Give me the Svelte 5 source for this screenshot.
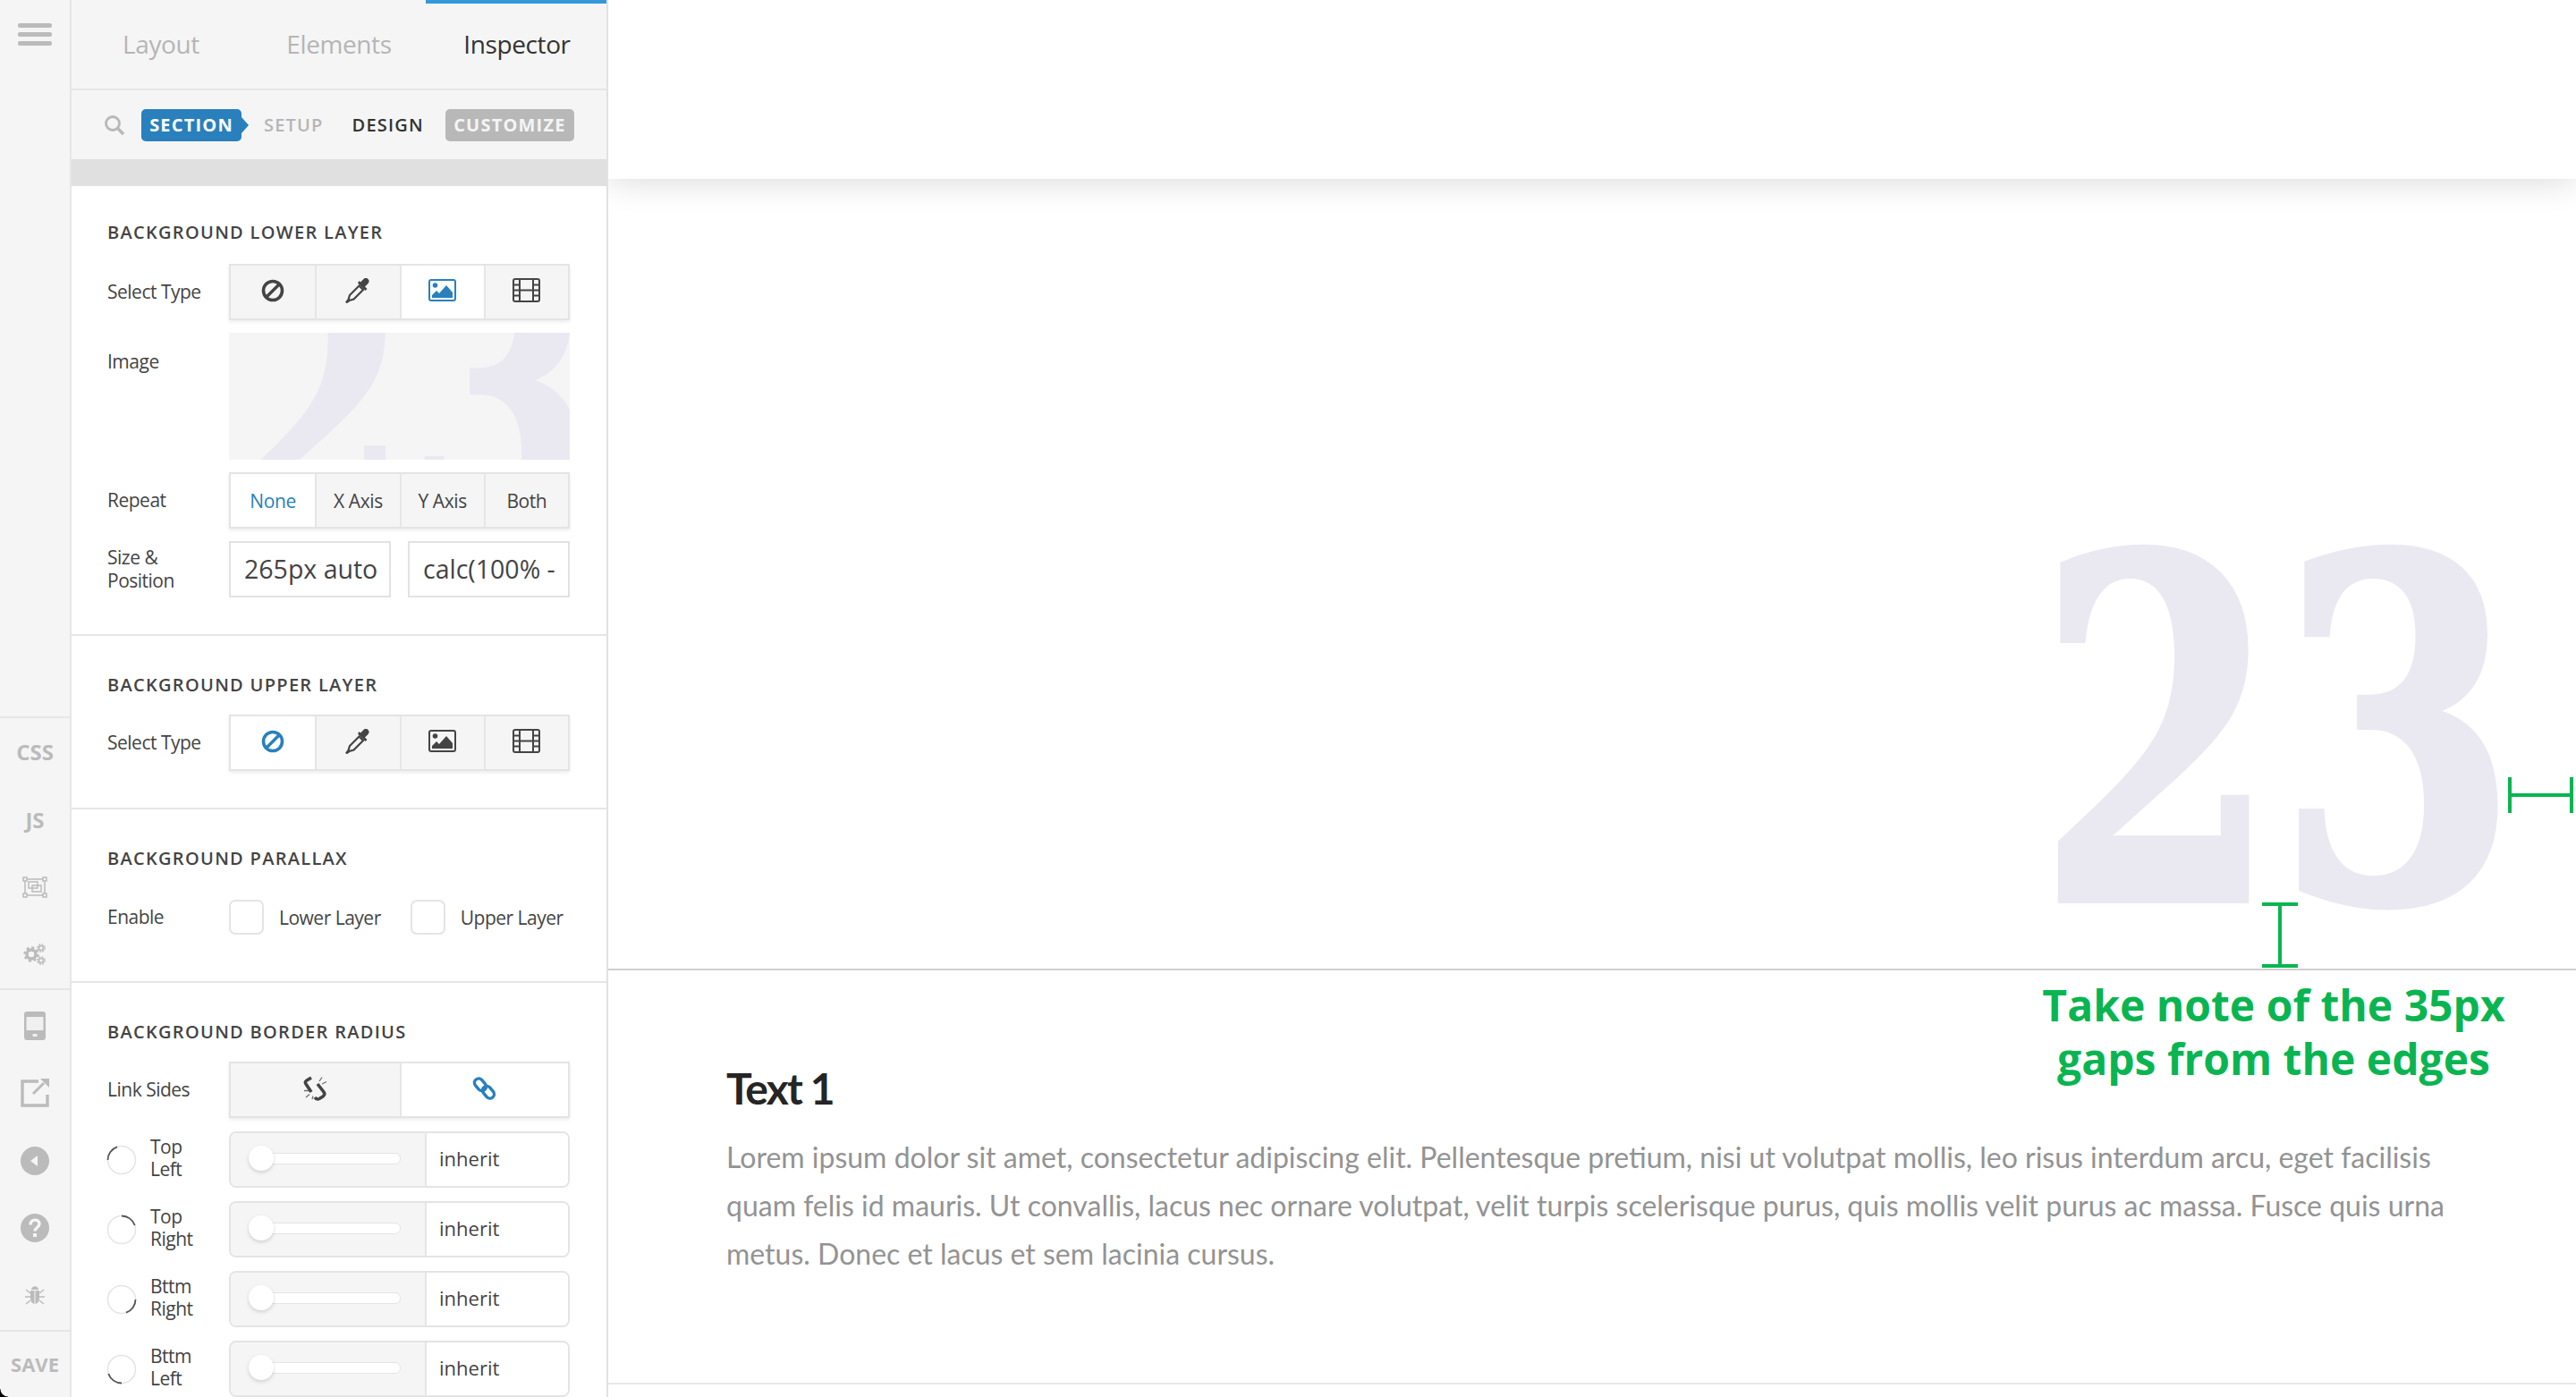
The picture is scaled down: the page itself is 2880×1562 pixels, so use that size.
<script>
  const tabs = [
    { text: "Layout" },
    { text: "Elements" },
    { text: "Inspector", active: true },
  ];
  const lowerTypes = [
    { icon: "ban" },
    { icon: "dropper" },
    { icon: "image", active: true },
    { icon: "film" },
  ];
  const upperTypes = [
    { icon: "ban", active: true },
    { icon: "dropper" },
    { icon: "image" },
    { icon: "film" },
  ];
  const repeats = [
    { text: "None", active: true },
    { text: "X Axis" },
    { text: "Y Axis" },
    { text: "Both" },
  ];
  const corners = [
    { one: "Top", two: "Left", angle: 0 },
    { one: "Top", two: "Right", angle: 90 },
    { one: "Bttm", two: "Right", angle: 180 },
    { one: "Bttm", two: "Left", angle: 270 },
  ];
  const railTop = ["css", "js", "transform", "gears"];
  const railBottom = ["device", "export", "back", "help", "bug"];
</script>

{#snippet icon(name)}
  {#if name === "ban"}
    <svg class="ico" width="26" height="26" viewBox="0 0 26 26">
      <circle cx="13" cy="13" r="10.500" fill="none" stroke="currentColor" stroke-width="3.600" />
      <path d="M6.500 19.500 19.500 6.500" stroke="currentColor" stroke-width="3.400" />
    </svg>
  {:else if name === "dropper"}
    <svg class="ico" width="28" height="28" viewBox="0 0 28 28">
      <path d="M15.500 8.500 5 19l-1.500 5L1 27.500l3.500-2.500 5-1.500L20 13z" fill="none" stroke="currentColor" stroke-width="2.200" />
      <path d="M14 5.500 22.500 14l2-2-2.500-2.500L25.500 6c1.500-2 1.500-3.500 0-5s-3.500-1.500-5 0L17 4.500 15.500 3z" fill="currentColor" />
    </svg>
  {:else if name === "image"}
    <svg class="ico" width="31" height="25" viewBox="0 0 31 25">
      <rect x="1" y="1" width="29" height="23" rx="2" fill="none" stroke="currentColor" stroke-width="2" />
      <circle cx="7.500" cy="7" r="2.800" fill="currentColor" />
      <path d="M4 21v-3l5-5 3 3 8-9 7 8v6z" fill="currentColor" />
    </svg>
  {:else if name === "film"}
    <svg class="ico" width="31" height="27" viewBox="0 0 31 27">
      <rect x="1" y="1" width="29" height="25" rx="2" fill="none" stroke="currentColor" stroke-width="2" />
      <path d="M8 1v25M23 1v25M8 13.500h15M1 7.500h7M1 13.500h7M1 19.500h7M23 7.500h7M23 13.500h7M23 19.500h7" stroke="currentColor" stroke-width="2" fill="none" />
    </svg>
  {:else if name === "unlink"}
    <svg class="ico" width="27" height="28" viewBox="0 0 27 28">
      <path d="M9 2 4 5Q1.500 6.500 3 9l6 9M16 9l7 9q2 3-1 5l-4 2.500q-3 1.500-5-1.500" fill="none" stroke="currentColor" stroke-width="3.600" />
      <path d="M21 1.500l-3 4.500M26 6.500 21 9M1 16.500h5M3 24l4-3.500M10 26l1-3.500" fill="none" stroke="currentColor" stroke-width="1.300" opacity=".75" />
    </svg>
  {:else if name === "link"}
    <svg class="ico" width="27" height="28" viewBox="0 0 27 28">
      <rect x="1.500" y="5" width="15" height="9.500" rx="4.700" transform="rotate(50 9 9.700)" fill="none" stroke="currentColor" stroke-width="3.400" />
      <rect x="10.500" y="13.500" width="15" height="9.500" rx="4.700" transform="rotate(50 18 18.200)" fill="none" stroke="currentColor" stroke-width="3.400" />
    </svg>
  {:else if name === "css"}
    <span class="rail-text">CSS</span>
  {:else if name === "js"}
    <span class="rail-text">JS</span>
  {:else if name === "transform"}
    <svg width="28" height="24" viewBox="0 0 28 24" fill="none" stroke="currentColor" stroke-width="1.500">
      <rect x="3" y="3" width="22" height="18" />
      <rect x="7" y="6" width="10" height="7" />
      <rect x="11" y="10" width="10" height="7" />
      <rect x="1" y="1" width="4" height="4" fill="#f5f5f5" />
      <rect x="23" y="1" width="4" height="4" fill="#f5f5f5" />
      <rect x="1" y="19" width="4" height="4" fill="#f5f5f5" />
      <rect x="23" y="19" width="4" height="4" fill="#f5f5f5" />
    </svg>
  {:else if name === "gears"}
    <svg width="26" height="24" viewBox="0 0 26 24" fill="none" stroke="currentColor">
      <circle cx="9" cy="12" r="5" stroke-width="3.400" />
      <circle cx="9" cy="12" r="7.500" stroke-width="2.400" stroke-dasharray="3 2.900" />
      <circle cx="20" cy="5" r="2.500" stroke-width="1.600" />
      <circle cx="20" cy="5" r="4.200" stroke-width="1.400" stroke-dasharray="2 1.300" />
      <circle cx="20" cy="19" r="2.500" stroke-width="1.600" />
      <circle cx="20" cy="19" r="4.200" stroke-width="1.400" stroke-dasharray="2 1.300" />
    </svg>
  {:else if name === "device"}
    <svg width="24" height="32" viewBox="0 0 24 32">
      <rect width="24" height="32" rx="3" fill="currentColor" />
      <rect x="2.500" y="6" width="19" height="15" fill="#f0f0f0" />
      <rect x="9.500" y="25" width="5" height="3" fill="#f0f0f0" />
    </svg>
  {:else if name === "export"}
    <svg width="32" height="32" viewBox="0 0 32 32" fill="none" stroke="currentColor">
      <path d="M20 3H2v27h28V18" stroke-width="3.400" />
      <path d="M14 17 26 5" stroke-width="3" />
      <path d="M22 0h10v10z" fill="currentColor" stroke="none" />
    </svg>
  {:else if name === "back"}
    <svg width="32" height="32" viewBox="0 0 32 32">
      <circle cx="16" cy="16" r="16" fill="currentColor" />
      <path d="M11 16l8-6v12z" fill="#f5f5f5" />
    </svg>
  {:else if name === "help"}
    <svg width="32" height="32" viewBox="0 0 32 32">
      <circle cx="16" cy="16" r="16" fill="currentColor" />
      <path d="M11 12.500c0-7 10-7 10-1 0 4-5 4-5 8" fill="none" stroke="#f5f5f5" stroke-width="3.400" />
      <rect x="14" y="22" width="4" height="4" fill="#f5f5f5" />
    </svg>
  {:else if name === "bug"}
    <svg width="22" height="22" viewBox="0 0 22 22" fill="currentColor">
      <path d="M7 4c0-5 8-5 8 0z" />
      <path d="M6 5h4.500v15C7 19 6 16 6 13zM11.500 5H16v8c0 3-1 6-4.500 7z" />
      <path d="M1 4l5 4M21 4l-5 4M0 12h6M22 12h-6M1 20l5-4M21 20l-5-4" stroke="currentColor" stroke-width="1.500" />
    </svg>
  {/if}
{/snippet}

{#snippet segments(items)}
  <div class="segments" style="grid-template-columns: repeat({items.length}, 1fr)">
    {#each items as item}
      <div class="cell" class:active={item.active}>
        {#if item.icon}
          {@render icon(item.icon)}
        {:else}
          {item.text}
        {/if}
      </div>
    {/each}
  </div>
{/snippet}

<div class="page">
  <nav class="rail">
    <div class="burger"><i></i><i></i><i></i></div>
    <div class="rail-group first-group">
      {#each railTop as r}
        <div class="rail-item">{@render icon(r)}</div>
      {/each}
    </div>
    <div class="rail-group second-group">
      {#each railBottom as r}
        <div class="rail-item">{@render icon(r)}</div>
      {/each}
    </div>
    <div class="save">SAVE</div>
    <div class="corner"></div>
  </nav>

  <aside class="panel">
    <div class="tabs">
      {#each tabs as t}
        <div class="tab" class:active={t.active}>{t.text}</div>
      {/each}
    </div>
    <div class="subnav">
      <svg class="search" width="24" height="24" viewBox="0 0 24 24" fill="none" stroke="currentColor">
        <circle cx="10" cy="10" r="7.500" stroke-width="2.800" />
        <path d="M15.500 15.500 22 22" stroke-width="3.600" />
      </svg>
      <span class="tag">SECTION</span>
      <span class="sub muted">SETUP</span>
      <span class="sub">DESIGN</span>
      <span class="custom">CUSTOMIZE</span>
    </div>
    <div class="bar"></div>

    <section class="group top">
      <h3>BACKGROUND LOWER LAYER</h3>
      <div class="row">
        <span class="label">Select Type</span>
        {@render segments(lowerTypes)}
      </div>
      <div class="row image-row">
        <span class="label">Image</span>
        <div class="thumb"><span class="thumb-num">23</span></div>
      </div>
      <div class="row">
        <span class="label">Repeat</span>
        {@render segments(repeats)}
      </div>
      <div class="row">
        <span class="label">Size &amp;<br />Position</span>
        <div class="inputs">
          <div class="input">265px auto</div>
          <div class="input">calc(100% -</div>
        </div>
      </div>
    </section>

    <section class="group">
      <h3>BACKGROUND UPPER LAYER</h3>
      <div class="row">
        <span class="label">Select Type</span>
        {@render segments(upperTypes)}
      </div>
    </section>

    <section class="group parallax">
      <h3>BACKGROUND PARALLAX</h3>
      <div class="row check-row">
        <span class="label">Enable</span>
        <div class="checks">
          <div class="check"><i></i>Lower Layer</div>
          <div class="check"><i></i>Upper Layer</div>
        </div>
      </div>
    </section>

    <section class="group">
      <h3>BACKGROUND BORDER RADIUS</h3>
      <div class="row link-row">
        <span class="label">Link Sides</span>
        <div class="segments" style="grid-template-columns: repeat(2, 1fr)">
          <div class="cell">{@render icon("unlink")}</div>
          <div class="cell active">{@render icon("link")}</div>
        </div>
      </div>
      {#each corners as c}
        <div class="row corner-row">
          <div class="corner-label">
            <svg width="34" height="34" viewBox="0 0 34 34" fill="none">
              <circle cx="17" cy="17" r="15.500" stroke="#e4e4e4" stroke-width="1.500" />
              <path d="M1.500 17A15.500 15.500 0 0 1 12 2.300" stroke="#555" stroke-width="1.800" transform="rotate({c.angle} 17 17)" />
            </svg>
            <span>{c.one}<br />{c.two}</span>
          </div>
          <div class="slider">
            <div class="track-wrap"><div class="track"></div><div class="knob"></div></div>
            <div class="value">inherit</div>
          </div>
        </div>
      {/each}
    </section>
  </aside>

  <main class="main">
    <div class="header-block"></div>
    <div class="hero">
      <span class="big-num">23</span>
    </div>
    <div class="copy">
      <h2>Text 1</h2>
      <p>Lorem ipsum dolor sit amet, consectetur adipiscing elit. Pellentesque pretium, nisi ut volutpat mollis, leo risus interdum arcu, eget facilisis quam felis id mauris. Ut convallis, lacus nec ornare volutpat, velit turpis scelerisque purus, quis mollis velit purus ac massa. Fusce quis urna metus. Donec et lacus et sem lacinia cursus.</p>
    </div>

    <!-- green notes drawn over the page -->
    <svg class="gap gap-h" width="73" height="44" viewBox="0 0 73 44">
      <path d="M2 2v40M71 2v40M2 22h69" fill="none" stroke="#0ab551" stroke-width="4" />
    </svg>
    <svg class="gap gap-v" width="44" height="73" viewBox="0 0 44 73">
      <path d="M2 2h40M2 71h40M22 2v69" fill="none" stroke="#0ab551" stroke-width="4" />
    </svg>
    <div class="note">Take note of the 35px<br />gaps from the edges</div>
  </main>
</div>

<style>
  :global(body) {
    margin: 0;
    background: #fff;
  }
  .page {
    display: flex;
    width: 2880px;
    height: 1562px;
    overflow: hidden;
    font-family: "Open Sans", sans-serif;
    color: #444;
  }

  .rail {
    position: relative;
    flex: 0 0 80px;
    box-sizing: border-box;
    background: #f5f5f5;
    border-right: 2px solid #e6e6e6;
    display: flex;
    flex-direction: column;
    color: #bbb;
  }
  .burger {
    padding: 26px 0 0 20px;
    height: 801px;
    box-sizing: border-box;
  }
  .burger i {
    display: block;
    width: 38px;
    height: 5px;
    margin-bottom: 5px;
    border-radius: 2px;
    background: #bbb;
  }
  .rail-group {
    border-top: 2px solid #e6e6e6;
  }
  .first-group .rail-item {
    height: 75.5px;
  }
  .second-group {
    padding-top: 2px;
  }
  .second-group .rail-item {
    height: 75.5px;
  }
  .rail-item {
    display: flex;
    align-items: center;
    justify-content: center;
  }
  .rail-text {
    font-weight: 700;
    font-size: 24px;
  }
  .save {
    border-top: 2px solid #e6e6e6;
    flex: 1;
    display: flex;
    align-items: center;
    justify-content: center;
    font-weight: 700;
    font-size: 22px;
  }
  .corner {
    position: absolute;
    left: 0;
    bottom: 0;
    width: 9px;
    height: 9px;
    background: radial-gradient(circle at 100% 0, transparent 8px, #000 9px);
  }

  .panel {
    position: relative;
    z-index: 2;
    flex: 0 0 600px;
    min-width: 0;
    box-sizing: border-box;
    background: #fff;
    border-right: 2px solid #e2e2e2;
  }
  .tabs {
    display: grid;
    grid-template-columns: 200px 196px 202px;
    height: 101px;
    box-sizing: border-box;
    background: #f5f5f5;
    border-bottom: 2px solid #e6e6e6;
  }
  .tab {
    text-align: center;
    font-size: 28px;
    line-height: 98px;
    color: #b5b5b5;
    letter-spacing: -0.4px;
  }
  .tab + .tab {
    padding-left: 2px;
  }
  .tab.active {
    color: #333;
    box-shadow: inset 0 4px 0 #3498db;
  }
  .subnav {
    height: 77px;
    background: #f5f5f5;
    display: flex;
    align-items: center;
    font-size: 20px;
    font-weight: 600;
    letter-spacing: 1.2px;
  }
  .search {
    margin-left: 36px;
    color: #b8b8b8;
    margin-right: 18px;
  }
  .tag {
    position: relative;
    width: 112px;
    height: 36px;
    line-height: 36px;
    text-align: center;
    box-sizing: border-box;
    background: #2980bd;
    border-radius: 5px;
    color: #fff;
    font-weight: 700;
  }
  .tag::after {
    content: "";
    position: absolute;
    left: 112px;
    top: 9px;
    border-left: 8px solid #2980bd;
    border-top: 9px solid transparent;
    border-bottom: 9px solid transparent;
  }
  .sub {
    margin-left: 25px;
    color: #333;
  }
  .sub.muted {
    color: #b5b5b5;
    margin-right: 7px;
  }
  .custom {
    margin-left: 24px;
    width: 144px;
    height: 36px;
    line-height: 36px;
    text-align: center;
    background: #b8b8b8;
    border-radius: 5px;
    color: #f5f5f5;
    font-weight: 700;
  }
  .bar {
    height: 30px;
    background: #e0e0e0;
  }

  .group {
    padding: 41px 41px 41px 40px;
    border-bottom: 2px solid #e6e6e6;
  }
  .group.top {
    padding-top: 38px;
  }
  .group.top h3 {
    margin-bottom: 21px;
  }
  .group.parallax {
    padding-bottom: 52px;
  }
  .group.parallax h3 {
    margin-bottom: 32px;
  }
  h3 {
    margin: 0 0 19px;
    font-size: 20px;
    line-height: 28px;
    font-weight: 600;
    letter-spacing: 1.3px;
    color: #444;
  }
  .row {
    display: flex;
    align-items: center;
    margin-bottom: 14px;
    min-height: 63px;
  }
  .row:last-child {
    margin-bottom: 0;
  }
  .label {
    flex: 0 0 136px;
    font-size: 21px;
    line-height: 26px;
    letter-spacing: -0.5px;
    padding-bottom: 1px;
  }
  .image-row {
    align-items: flex-start;
  }
  .image-row .label {
    padding-top: 19px;
  }
  .segments {
    flex: 1;
    display: grid;
    height: 63px;
    box-sizing: border-box;
    border: 2px solid #e4e4e4;
    box-shadow: 0 2px 4px rgba(0, 0, 0, 0.08);
  }
  .cell {
    display: flex;
    align-items: center;
    justify-content: center;
    background: #f5f5f5;
    border-left: 2px solid #e6e6e6;
    font-size: 21px;
    letter-spacing: -0.4px;
    color: #444;
  }
  .cell:first-child {
    border-left: 0;
  }
  .cell.active {
    background: #fff;
    color: #2980bd;
  }
  .ico {
    margin-top: -4px;
  }
  .thumb {
    position: relative;
    flex: 1;
    height: 142px;
    overflow: hidden;
    background: #f5f5f5;
  }
  .thumb-num {
    position: absolute;
    left: -8px;
    top: -133px;
    font-family: "DejaVu Serif", serif;
    font-weight: 700;
    font-size: 411px;
    line-height: 1;
    color: #eae9f2;
    -webkit-text-stroke: 6px #eae9f2;
    transform: scaleX(0.727);
    transform-origin: 0 0;
  }
  .inputs {
    flex: 1;
    display: grid;
    grid-template-columns: 1fr 1fr;
    gap: 19px;
  }
  .input {
    height: 63px;
    box-sizing: border-box;
    border: 2px solid #e2e2e2;
    padding-left: 15px;
    line-height: 58px;
    font-size: 28.5px;
    white-space: nowrap;
    overflow: hidden;
  }
  .checks {
    display: flex;
    flex: 1;
  }
  .check-row {
    min-height: 38px;
  }
  .check {
    display: flex;
    align-items: center;
    white-space: nowrap;
    font-size: 21px;
    letter-spacing: -0.5px;
    margin-right: 33px;
  }
  .check:last-child {
    margin-right: 0;
  }
  .check i {
    width: 39px;
    height: 39px;
    box-sizing: border-box;
    border: 2px solid #e4e4e4;
    border-radius: 7px;
    margin-right: 17px;
  }
  .link-row {
    margin-bottom: 15px;
  }
  .corner-row {
    margin-top: 15px;
    margin-bottom: 0;
  }
  .corner-label {
    flex: 0 0 136px;
    display: flex;
    align-items: center;
    font-size: 21px;
    line-height: 25px;
    letter-spacing: -0.5px;
  }
  .corner-label span {
    padding-bottom: 4px;
  }
  .corner-label svg {
    margin-left: -1px;
    margin-right: 15px;
  }
  .slider {
    flex: 1;
    display: flex;
    height: 63px;
    box-sizing: border-box;
    border: 2px solid #e4e4e4;
    border-radius: 8px;
    overflow: hidden;
  }
  .track-wrap {
    position: relative;
    flex: 0 0 217px;
    background: #f5f5f5;
    border-right: 2px solid #e6e6e6;
  }
  .track {
    position: absolute;
    left: 30px;
    top: 22px;
    width: 158px;
    height: 11px;
    background: #fff;
    border: 1.500px solid #e4e4e4;
    border-radius: 6px;
  }
  .knob {
    position: absolute;
    left: 20px;
    top: 14px;
    width: 28px;
    height: 28px;
    border-radius: 50%;
    background: #fff;
    box-shadow: 0 2px 4px rgba(0, 0, 0, 0.15);
  }
  .value {
    flex: 1;
    padding-left: 14px;
    line-height: 57px;
    font-size: 22px;
    background: #fff;
  }

  .main {
    position: relative;
    flex: 1;
    min-width: 0;
  }
  .header-block {
    position: relative;
    z-index: 1;
    height: 200px;
    background: #fff;
    box-shadow: 0 4px 34px rgba(0, 0, 0, 0.14);
  }
  .hero {
    position: relative;
    height: 883px;
    border-bottom: 2px solid #cfcfcf;
    overflow: hidden;
  }
  .big-num {
    position: absolute;
    left: 1598px;
    top: 355px;
    font-family: "DejaVu Serif", serif;
    font-weight: 700;
    font-size: 530px;
    line-height: 1;
    color: #eae9f2;
    -webkit-text-stroke: 8px #eae9f2;
    transform: scaleX(0.727);
    transform-origin: 0 0;
  }
  .copy {
    height: 463px;
    box-sizing: border-box;
    padding: 102px 100px 0 132px;
    border-bottom: 2px solid #e8e8e8;
    font-family: Lato, sans-serif;
  }
  h2 {
    margin: 0 0 20px;
    font-size: 48px;
    line-height: 60px;
    font-weight: 700;
    letter-spacing: -1.8px;
    color: #252525;
  }
  p {
    margin: 0;
    font-size: 32px;
    line-height: 54px;
    color: #939393;
  }
  .gap {
    position: absolute;
    z-index: 3;
  }
  .gap-h {
    left: 2124px;
    top: 867px;
  }
  .gap-v {
    left: 1847px;
    top: 1009px;
  }
  .note {
    position: absolute;
    z-index: 3;
    left: 1582px;
    top: 1094px;
    width: 560px;
    text-align: center;
    font-weight: 700;
    font-size: 48px;
    line-height: 60px;
    color: #0ab551;
  }
</style>
